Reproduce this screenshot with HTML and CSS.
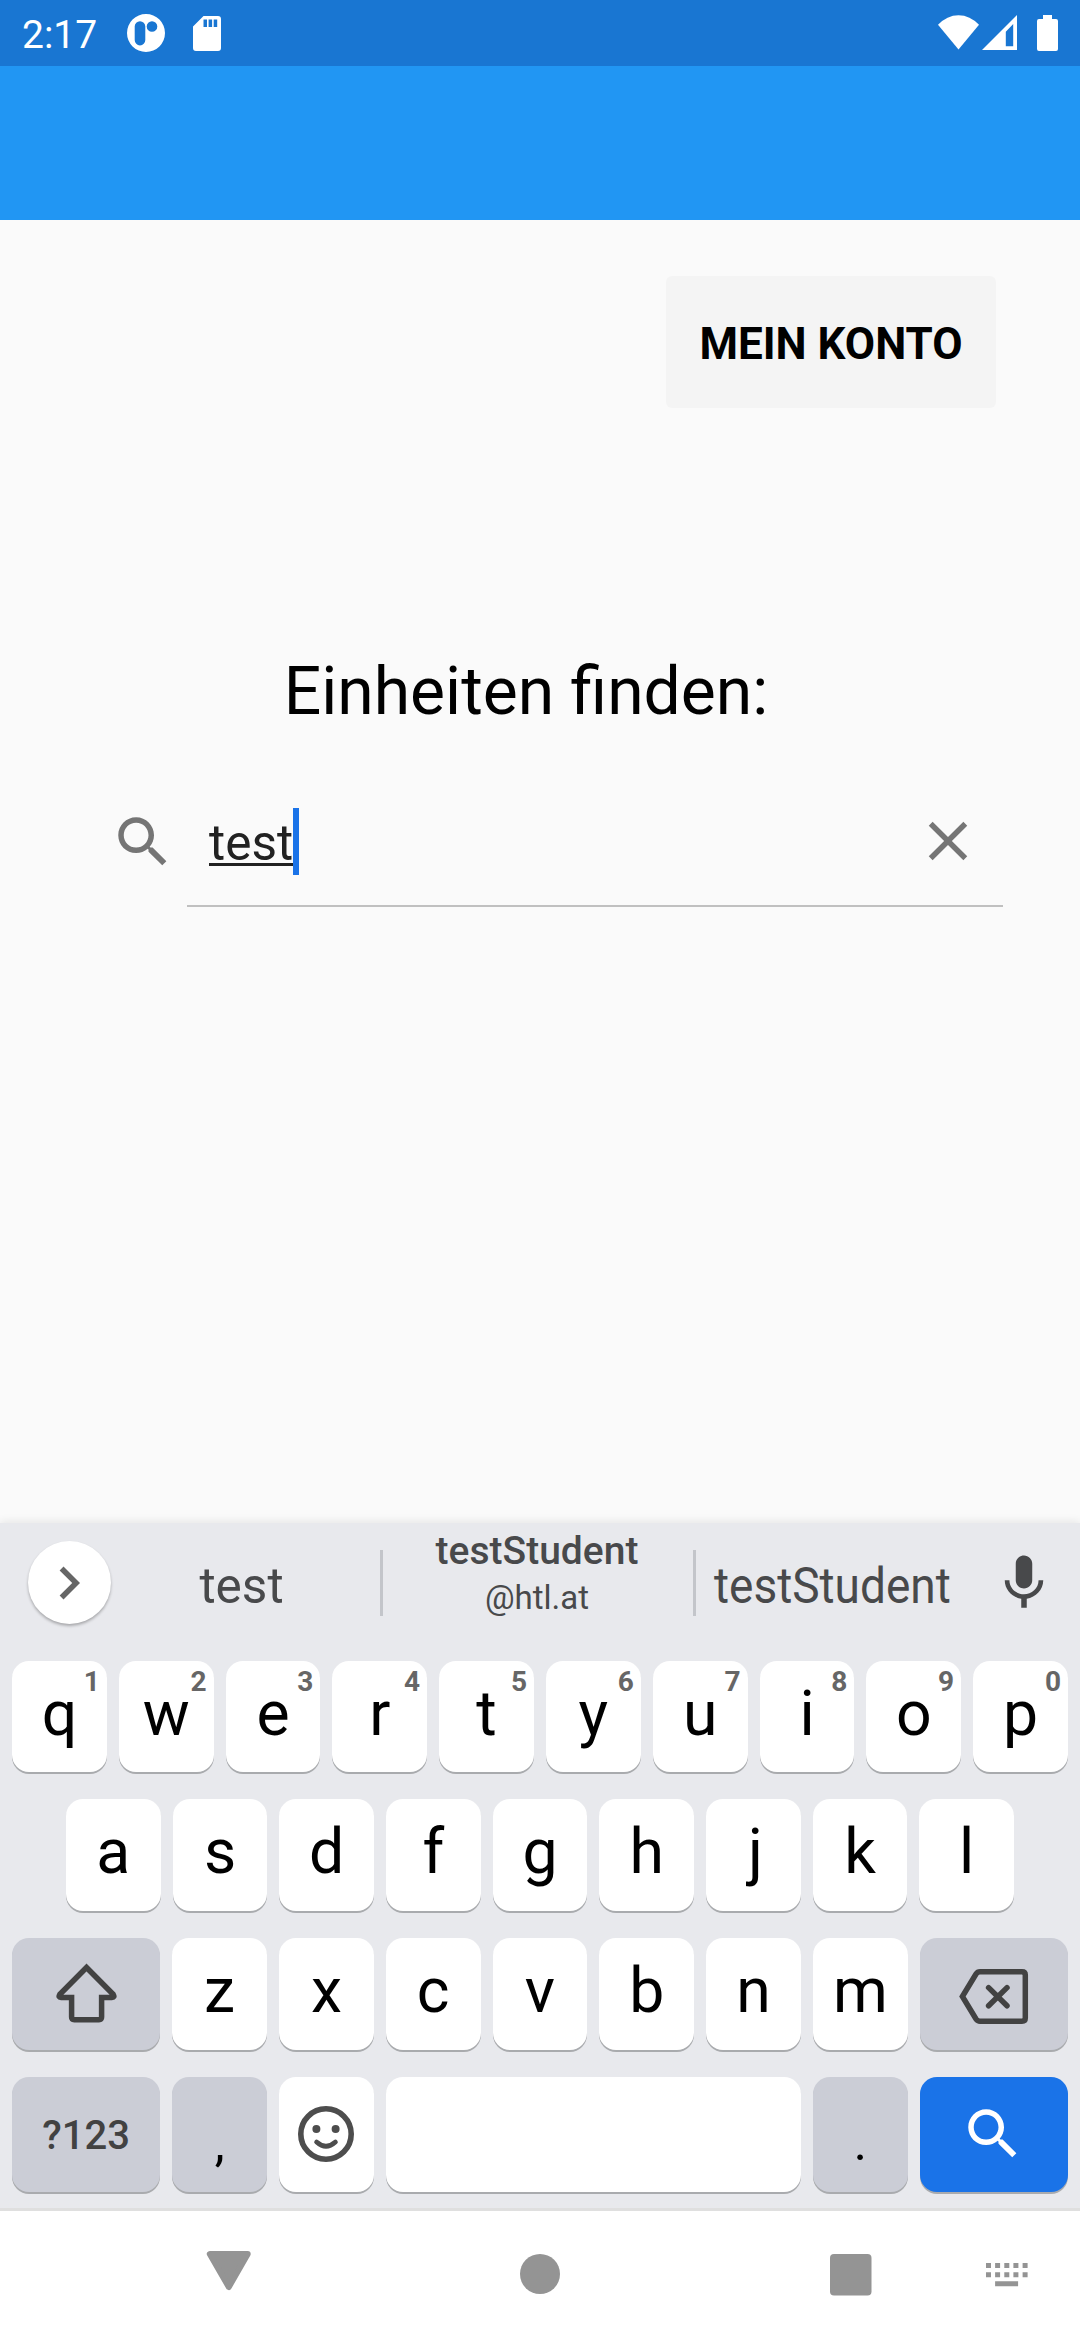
FILE: index.html
```html
<!DOCTYPE html>
<html lang="de">
<head>
<meta charset="utf-8">
<title>Einheiten finden</title>
<link rel="stylesheet" href="styles.css">
</head>
<body>
<div class="screen">
  <header class="status">
    <span class="clock">2:17</span>
    <svg class="ic-app" width="38" height="38" viewBox="0 0 38 38"><path fill="#fff" fill-rule="evenodd" d="M19 0a19 19 0 1 1 0 38a19 19 0 1 1 0-38zM13 7.200a5.300 5.300 0 0 0-5.300 5.300v13.600a5.300 5.300 0 0 0 10.600 0V12.500a5.300 5.300 0 0 0-5.300-5.300zM25 7.200a5.300 5.300 0 1 0 0 10.600a5.300 5.300 0 1 0 0-10.600z"/></svg>
    <svg class="ic-sd" width="28" height="35" viewBox="0 0 28 35"><path fill="#fff" fill-rule="evenodd" d="M10.500 0H25Q28 0 28 3V32Q28 35 25 35H3Q0 35 0 32V10.500zM10.500 3.500V11H14V3.500zM15.600 3.500V11H19.100V3.500zM20.700 3.500V11H24.200V3.500z"/></svg>
    <span class="spacer"></span>
    <svg class="ic-wifi" width="41" height="35" viewBox="0 0 41 35"><path fill="#fff" d="M20.500 34.600L0 9.800Q9 .200 20.500 .200T41 9.800z"/></svg>
    <svg class="ic-signal" width="35" height="35" viewBox="0 0 35 35"><path fill="#fff" fill-rule="evenodd" d="M0 35L35 0V35zM23.800 31.300H31.200V9L23.800 16.700z"/></svg>
    <svg class="ic-battery" width="21" height="36" viewBox="0 0 21 36"><path fill="#fff" d="M6 0H15V4H19Q21 4 21 6V34Q21 36 19 36H2Q0 36 0 34V6Q0 4 2 4H6z"/></svg>
  </header>
  <div class="appbar"></div>

  <main class="content">
    <button class="account">MEIN KONTO</button>
    <h1 class="title">Einheiten finden:</h1>
    <div class="search">
      <svg class="ic-search" width="66" height="66" viewBox="0 0 24 24"><path fill="#757575" d="M15.500 14h-.79l-.28-.27C15.410 12.590 16 11.110 16 9.500 16 5.910 13.090 3 9.500 3S3 5.910 3 9.500 5.910 16 9.500 16c1.610 0 3.090-.59 4.230-1.570l.27.28v.79l5 4.990L20.490 19l-4.990-5zm-6 0C7.010 14 5 11.990 5 9.500S7.010 5 9.500 5 14 7.010 14 9.500 11.990 14 9.500 14z"/></svg>
      <div class="field">
        <span class="query">test</span><span class="caret"></span>
        <svg class="ic-clear" width="66" height="66" viewBox="0 0 24 24"><path fill="#757575" d="M19 6.410L17.590 5 12 10.590 6.410 5 5 6.410 10.590 12 5 17.590 6.410 19 12 13.410 17.590 19 19 17.590 13.410 12z"/></svg>
      </div>
    </div>
  </main>

  <section class="keyboard">
    <div class="suggestions">
      <div class="expand"><svg width="66" height="66" viewBox="0 0 24 24"><path fill="#666" d="M10 6L8.590 7.410 13.170 12l-4.580 4.590L10 18l6-6z"/></svg></div>
      <div class="word word-a">test</div>
      <div class="divider"></div>
      <div class="word-mid"><b class="mid-main">testStudent</b><span class="mid-sub">@htl.at</span></div>
      <div class="divider"></div>
      <div class="word word-c"><span class="narrow">testStudent</span></div>
      <svg class="ic-mic" width="66" height="66" viewBox="0 0 24 24"><path fill="#48494b" d="M12 14c1.660 0 2.990-1.340 2.990-3L15 5c0-1.660-1.340-3-3-3S9 3.340 9 5v6c0 1.660 1.340 3 3 3zm5.300-3c0 3-2.540 5.100-5.300 5.100S6.700 14 6.700 11H5c0 3.410 2.720 6.230 6 6.720V21h2v-3.280c3.280-.48 6-3.300 6-6.720h-1.700z"/></svg>
    </div>
    <div class="row">
      <div class="key">q<i class="hint">1</i></div><div class="key">w<i class="hint">2</i></div><div class="key">e<i class="hint">3</i></div><div class="key">r<i class="hint">4</i></div><div class="key">t<i class="hint">5</i></div><div class="key">y<i class="hint">6</i></div><div class="key">u<i class="hint">7</i></div><div class="key">i<i class="hint">8</i></div><div class="key">o<i class="hint">9</i></div><div class="key">p<i class="hint">0</i></div>
    </div>
    <div class="row row-home">
      <div class="key">a</div><div class="key">s</div><div class="key">d</div><div class="key">f</div><div class="key">g</div><div class="key">h</div><div class="key key-j">j</div><div class="key">k</div><div class="key">l</div>
    </div>
    <div class="row">
      <div class="key wide gray icon"><svg class="ic-shift" width="61" height="60" viewBox="0 0 61 60"><path fill="none" stroke="#424242" stroke-width="5.500" d="M30.500 4.500L3.700 31.500Q2 34.500 5 34.500H15.600V54Q15.600 56.700 18.300 56.700H43Q45.600 56.700 45.600 54V34.500H56Q59 34.500 57.300 31.500z"/></svg></div>
      <div class="key">z</div><div class="key">x</div><div class="key">c</div><div class="key">v</div><div class="key">b</div><div class="key">n</div><div class="key">m</div>
      <div class="key wide gray icon"><svg class="ic-back" width="70" height="55" viewBox="0 0 70 55"><g fill="none" stroke="#424242" stroke-width="5.500"><path d="M3.400 27.500L17 5Q18.500 2.800 21 2.800H63Q66.300 2.800 66.300 6V49Q66.300 52.200 63 52.200H21Q18.500 52.200 17 50z"/><path stroke-linecap="round" d="M29.600 18.600L48 36.800M48 18.600L29.600 36.800"/></g></svg></div>
    </div>
    <div class="row row-last">
      <div class="key wide gray symbols">?123</div>
      <div class="key gray punct">,</div>
      <div class="key icon"><svg class="ic-smile" width="56" height="56" viewBox="0 0 56 56"><circle cx="28" cy="28" r="25.200" fill="none" stroke="#4d4d4d" stroke-width="5.600"/><circle cx="18.400" cy="23" r="4" fill="#4d4d4d"/><circle cx="37.600" cy="23" r="4" fill="#4d4d4d"/><path d="M18.600 36Q28 44.500 37.400 36" fill="none" stroke="#4d4d4d" stroke-width="4.800" stroke-linecap="round"/></svg></div>
      <div class="key space"></div>
      <div class="key gray punct">.</div>
      <div class="key wide blue icon"><svg class="ic-go" width="66" height="66" viewBox="0 0 24 24"><path fill="#fff" d="M15.500 14h-.79l-.28-.27C15.410 12.590 16 11.110 16 9.500 16 5.910 13.090 3 9.500 3S3 5.910 3 9.500 5.910 16 9.500 16c1.610 0 3.090-.59 4.230-1.570l.27.28v.79l5 4.990L20.490 19l-4.990-5zm-6 0C7.010 14 5 11.990 5 9.500S7.010 5 9.500 5 14 7.010 14 9.500 11.990 14 9.500 14z"/></svg></div>
    </div>
  </section>

  <nav class="navbar">
    <svg class="nav-back" width="46" height="40" viewBox="0 0 46 40"><path fill="#949494" stroke="#949494" stroke-width="6" stroke-linejoin="round" d="M3.800 3H41.700L22.800 36z"/></svg>
    <svg class="nav-home" width="40" height="40" viewBox="0 0 40 40"><circle cx="20" cy="20" r="20" fill="#949494"/></svg>
    <svg class="nav-recent" width="42" height="42" viewBox="0 0 42 42"><rect width="41.500" height="41.500" rx="4" fill="#949494"/></svg>
    <svg class="nav-ime" width="42" height="24" viewBox="0 0 42 24"><path fill="#949494" d="M0 0h5v5H0zM9.100 0h5v5h-5zM18.300 0h5v5h-5zM27.400 0h5v5h-5zM36.600 0h5v5h-5zM0 9.200h5v5H0zM9.100 9.200h5v5h-5zM18.300 9.200h5v5h-5zM27.400 9.200h5v5h-5zM36.600 9.200h5v5h-5zM9.100 18.300h23v5h-23z"/></svg>
  </nav>
</div>
</body>
</html>
```
FILE: styles.css
```css
* { box-sizing: border-box; }
body { margin: 0; font-family: Roboto, sans-serif; }
svg { display: block; flex: none; }

.screen {
  width: 1080px;
  height: 2340px;
  display: flex;
  flex-direction: column;
  background: #fafafa;
  overflow: hidden;
}

/* status and app bars */
.status {
  height: 66px;
  flex: none;
  display: flex;
  align-items: flex-start;
  padding: 0 22px 0 22px;
  background: #1976d2;
  color: #fff;
}
.clock { width: 105px; font-size: 39px; line-height: 70px; }
.spacer { flex: 1; }
.ic-app { margin-top: 14px; }
.ic-sd { margin: 16px 0 0 28px; }
.ic-wifi { margin-top: 15px; }
.ic-signal { margin: 15px 20px 0 3px; }
.ic-battery { margin-top: 15px; }
.appbar { height: 154px; flex: none; background: #2196f3; }

/* page content */
.content {
  height: 1303px;
  flex: none;
  display: flex;
  flex-direction: column;
  padding-top: 56px;
}
.account {
  align-self: flex-end;
  width: 330px;
  height: 132px;
  margin-right: 84px;
  padding: 4px 0 0;
  border: 0;
  border-radius: 6px;
  background: #f4f4f4;
  color: #000;
  font: 700 44px/1 Roboto, sans-serif;
  white-space: nowrap;
}
.title {
  margin: 244px 0 0;
  padding-right: 28px;
  text-align: center;
  font-size: 66px;
  font-weight: 400;
  line-height: 80px;
  color: #000;
}
.search {
  height: 130px;
  margin: 45px 77px 0 110px;
  display: flex;
  align-items: center;
}
.field {
  flex: 1;
  height: 130px;
  margin-left: 11px;
  padding: 0 22px;
  display: flex;
  align-items: center;
  border-bottom: 2px solid #c0c0c0;
}
.query {
  margin-top: 4px;
  font-size: 49.5px;
  line-height: 67px;
  color: #212121;
  text-decoration: underline;
  text-decoration-thickness: 3px;
  text-underline-offset: 3px;
  text-decoration-skip-ink: none;
}
.caret { width: 6px; height: 67px; background: #1a73e8; }
.ic-clear { margin-left: auto; }

/* keyboard */
.keyboard {
  height: 685px;
  flex: none;
  background: #e8e9ed;
  box-shadow: 0 -2px 8px rgba(0, 0, 0, .08);
}
.suggestions {
  height: 138px;
  display: flex;
  padding: 18px 23px 0 28px;
  color: #48494b;
}
.expand {
  width: 83px;
  height: 83px;
  flex: none;
  border-radius: 50%;
  background: #fff;
  box-shadow: 0 2px 3px rgba(0, 0, 0, .28);
  padding: 9px 0 0 8px;
}
.word { font-size: 49.5px; line-height: 60px; padding-top: 15px; text-align: center; }
.word-a { width: 269px; padding-right: 8px; }
.divider { width: 3px; height: 66px; flex: none; margin-top: 9px; background: #c3c5ca; }
.word-mid {
  width: 310px;
  flex: none;
  display: flex;
  flex-direction: column;
  align-items: center;
  margin-top: -12px;
  padding-right: 2px;
}
.mid-main { font-size: 39px; font-weight: 500; line-height: 44px; }
.mid-sub { font-size: 33px; line-height: 50px; }
.word-c { width: 273px; flex: none; display: flex; justify-content: center; }
.narrow { transform: scaleX(.93); }
.ic-mic { margin: 9px 0 0 22px; }

.row { height: 112px; margin-bottom: 27px; padding: 0 12px; display: flex; gap: 12px; }
.row:nth-child(2) { height: 111px; }
.row-home { padding: 0 66px; }
.row-last { height: 115px; margin: 0; }
.key {
  position: relative;
  width: 94.8px;
  flex: 0 1 auto;
  border-radius: 17px;
  background: #fff;
  box-shadow: 0 2px 0 #a9abae;
  color: #000;
  font-size: 62.5px;
  line-height: 105px;
  text-align: center;
}
.key-j { padding-left: 4px; }
.hint {
  position: absolute;
  top: 4px;
  right: 7px;
  color: #666;
  font-size: 28px;
  font-style: normal;
  font-weight: 700;
  line-height: 33px;
}
.wide { width: 148.2px; }
.space { width: 415.2px; }
.gray { background: #cbcdd6; }
.blue { background: #1a73e8; }
.icon { display: flex; align-items: center; justify-content: center; }
.symbols { color: #424242; font-size: 40px; font-weight: 500; line-height: 118px; }
.punct { font-size: 50px; line-height: 133px; }
.ic-shift { margin-bottom: 2px; }
.ic-back { margin-top: 5px; }
.ic-smile { margin-bottom: 2px; }
.ic-go { margin-right: 2px; margin-bottom: 2px; }

/* system navigation */
.navbar {
  height: 132px;
  flex: none;
  display: flex;
  align-items: flex-start;
  border-top: 3px solid #dfdfdf;
  background: #fff;
}
.nav-back { margin: 40px 0 0 206px; }
.nav-home { margin: 43px 0 0 268px; }
.nav-recent { margin: 43px 0 0 270px; }
.nav-ime { margin: 52px 0 0 114px; }
```
